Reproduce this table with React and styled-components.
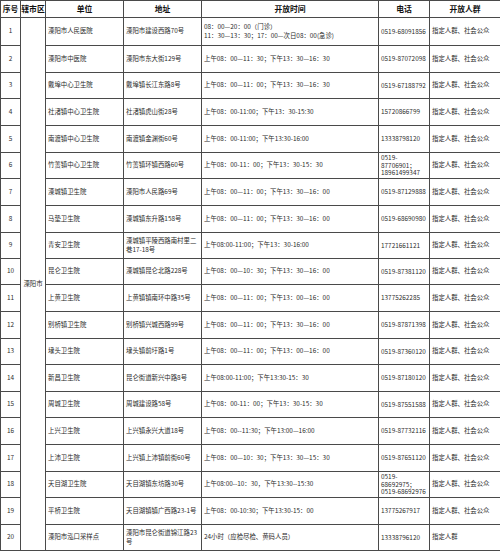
import React from "react";
import styled, { createGlobalStyle } from "styled-components";

const Global = createGlobalStyle`
  html, body { margin: 0; padding: 0; background: #fff; }
  body { font-family: "Noto Sans CJK SC", "Noto Sans", sans-serif; }
`;

const Table = styled.table`
  width: 500px;
  table-layout: fixed;
  border-collapse: collapse;
  color: #2a2a2a;
  font-family: "Noto Sans CJK SC", "Noto Sans", sans-serif;
`;

const HeadCell = styled.th`
  border: 1px solid #4a4a4a;
  height: 16px;
  padding: 0;
  font-size: 7.8px;
  font-weight: 700;
  color: #111;
  text-align: center;
  line-height: 8px;
  white-space: nowrap;
`;

const Row = styled.tr`
  height: ${(p) => p.$h}px;
`;

const Cell = styled.td`
  border: 1px solid #4a4a4a;
  padding: 0 0 0 ${(p) => (p.$center ? 0 : 2)}px;
  font-size: 6.4px;
  line-height: ${(p) => (p.$tight ? 7.6 : 8.6)}px;
  text-align: ${(p) => (p.$center ? "center" : "left")};
  vertical-align: middle;
  white-space: pre;
  overflow: hidden;
`;

const cols = [20, 25, 78, 78, 177, 51, 71];

const heights = [28, 27, 26, 27, 27, 26, 27, 27, 26, 26, 27, 27, 26, 27, 26, 27, 27, 26, 27, 26];

const P = "指定人群、社会公众";

const rows = [
  ["溧阳市人民医院", "溧阳市建设西路70号", "08：00—20：00（门诊）\n11：30—13：30；17：00—次日08：00(急诊)", "0519-68091856", P],
  ["溧阳市中医院", "溧阳市东大街129号", "上午08：00—11：30；下午13：30—16：30", "0519-87072098", P],
  ["戴埠中心卫生院", "戴埠镇长江东路8号", "上午08：00—11：00；下午13：30—16：30", "0519-67188792", P],
  ["社渚镇中心卫生院", "社渚镇虎山街28号", "上午08：00-11:00；下午13：30-15:30", "15720866799", P],
  ["南渡镇中心卫生院", "南渡镇金渊街60号", "上午08：00-11:00；下午13:30-16:00", "13338798120", P],
  ["竹箦镇中心卫生院", "竹箦镇环镇西路60号", "上午08：00-11：00；下午13：30-15：30", "0519-\n87706901；\n18961499347", P],
  ["溧城镇卫生院", "溧阳市人民路69号", "上午08：00—11：00；下午13：30—16：00", "0519-87129888", P],
  ["马垫卫生院", "溧城镇东升路158号", "上午08：00—11：00；下午13：30—16：00", "0519-68690980", P],
  ["青安卫生院", "溧城镇平陵西路南村里二\n巷17-18号", "上午08:00-11:00；下午13：30-16:00", "17721661121", P],
  ["昆仑卫生院", "溧城镇昆仑北路228号", "上午08：00—10：30；下午13：30—16：00", "0519-87381120", P],
  ["上黄卫生院", "上黄镇镇南环中路35号", "上午08：00—11：00；下午13：00—16：00", "13775262285", P],
  ["别桥镇卫生院", "别桥镇兴城西路99号", "上午08：00—11：00；下午13：30—16：00", "0519-87871398", P],
  ["埭头卫生院", "埭头镇前圩路1号", "上午08：00—11：00；下午13：00—16：00", "0519-87360120", P],
  ["新昌卫生院", "昆仑街道新兴中路8号", "上午08:00-11:00；下午13:30-15：30", "0519-87180120", P],
  ["周城卫生院", "周城建设路58号", "上午08：00-11：00；下午13：30-15：30", "0519-87551588", P],
  ["上兴卫生院", "上兴镇永兴大道18号", "上午08：00--11:30；下午13:00—16:00", "0519-87732116", P],
  ["上沛卫生院", "上兴镇上沛镇前街60号", "上午08：00—10：30；下午13：30—15：30", "0519-87651120", P],
  ["天目湖卫生院", "天目湖镇东坊路30号", "上午08:00--10：30，下午13:30--15:30", "0519-\n68692975；\n0519-68692976", P],
  ["平桥卫生院", "天目湖镇镇广西路23-1号", "上午08：00-10:30；下午13:30-15：00", "13775267917", P],
  ["溧阳市泓口采样点", "溧阳市昆仑街道锦江路23\n号", "24小时（应检尽检、黄码人员）", "13338796120", "指定人群"],
];

export default function App() {
  return (
    <>
      <Global />
      <Table>
        <colgroup>
          {cols.map((w, i) => (
            <col key={i} style={{ width: w }} />
          ))}
        </colgroup>
        <thead>
          <tr>
            <HeadCell>序号</HeadCell>
            <HeadCell>辖市区</HeadCell>
            <HeadCell>单位</HeadCell>
            <HeadCell>地址</HeadCell>
            <HeadCell>开放时间</HeadCell>
            <HeadCell>电话</HeadCell>
            <HeadCell>开放人群</HeadCell>
          </tr>
        </thead>
        <tbody>
          {rows.map((r, i) => (
            <Row key={i} $h={heights[i]}>
              <Cell $center>{i + 1}</Cell>
              {i === 0 && (
                <Cell $center rowSpan={20}>
                  溧阳市
                </Cell>
              )}
              <Cell>{r[0]}</Cell>
              <Cell>{r[1]}</Cell>
              <Cell>{r[2]}</Cell>
              <Cell $tight>{r[3]}</Cell>
              <Cell>{r[4]}</Cell>
            </Row>
          ))}
        </tbody>
      </Table>
    </>
  );
}
